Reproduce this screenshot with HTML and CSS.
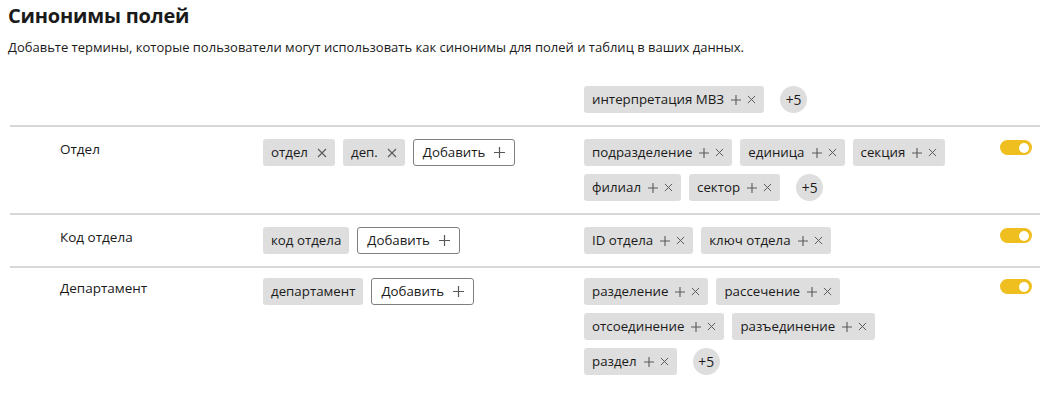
FILE: index.html
```html
<!DOCTYPE html>
<html lang="ru">
<head>
<meta charset="utf-8">
<link rel="stylesheet" href="styles.css">
</head>
<body>
<h1 class="title">Синонимы полей</h1>
<p class="subtitle">Добавьте термины, которые пользователи могут использовать как синонимы для полей и таблиц в ваших данных.</p>

<div class="table">
  <div class="row row-head">
    <div class="label"></div>
    <div class="chips"></div>
    <div class="chips">
      <span class="chip">интерпретация МВЗ<svg class="ic plus" viewBox="0 0 10 10"><path d="M5 0V10M0 5H10"/></svg><svg class="ic x" viewBox="0 0 10 10"><path d="M1 1L9 9M9 1L1 9"/></svg></span>
      <span class="more">+5</span>
    </div>
    <div class="switch-cell"></div>
  </div>

  <div class="row">
    <div class="label">Отдел</div>
    <div class="chips">
      <span class="chip">отдел<svg class="ic x solo" viewBox="0 0 10 10"><path d="M1 1L9 9M9 1L1 9"/></svg></span>
      <span class="chip">деп.<svg class="ic x solo" viewBox="0 0 10 10"><path d="M1 1L9 9M9 1L1 9"/></svg></span>
      <span class="add">Добавить<svg class="ic plus" viewBox="0 0 10 10"><path d="M5 0V10M0 5H10"/></svg></span>
    </div>
    <div class="chips">
      <span class="chip">подразделение<svg class="ic plus" viewBox="0 0 10 10"><path d="M5 0V10M0 5H10"/></svg><svg class="ic x" viewBox="0 0 10 10"><path d="M1 1L9 9M9 1L1 9"/></svg></span>
      <span class="chip">единица<svg class="ic plus" viewBox="0 0 10 10"><path d="M5 0V10M0 5H10"/></svg><svg class="ic x" viewBox="0 0 10 10"><path d="M1 1L9 9M9 1L1 9"/></svg></span>
      <span class="chip">секция<svg class="ic plus" viewBox="0 0 10 10"><path d="M5 0V10M0 5H10"/></svg><svg class="ic x" viewBox="0 0 10 10"><path d="M1 1L9 9M9 1L1 9"/></svg></span>
      <span class="chip">филиал<svg class="ic plus" viewBox="0 0 10 10"><path d="M5 0V10M0 5H10"/></svg><svg class="ic x" viewBox="0 0 10 10"><path d="M1 1L9 9M9 1L1 9"/></svg></span>
      <span class="chip">сектор<svg class="ic plus" viewBox="0 0 10 10"><path d="M5 0V10M0 5H10"/></svg><svg class="ic x" viewBox="0 0 10 10"><path d="M1 1L9 9M9 1L1 9"/></svg></span>
      <span class="more">+5</span>
    </div>
    <div class="switch-cell"><span class="switch"></span></div>
  </div>

  <div class="row">
    <div class="label">Код отдела</div>
    <div class="chips">
      <span class="chip">код отдела</span>
      <span class="add">Добавить<svg class="ic plus" viewBox="0 0 10 10"><path d="M5 0V10M0 5H10"/></svg></span>
    </div>
    <div class="chips">
      <span class="chip">ID отдела<svg class="ic plus" viewBox="0 0 10 10"><path d="M5 0V10M0 5H10"/></svg><svg class="ic x" viewBox="0 0 10 10"><path d="M1 1L9 9M9 1L1 9"/></svg></span>
      <span class="chip">ключ отдела<svg class="ic plus" viewBox="0 0 10 10"><path d="M5 0V10M0 5H10"/></svg><svg class="ic x" viewBox="0 0 10 10"><path d="M1 1L9 9M9 1L1 9"/></svg></span>
    </div>
    <div class="switch-cell"><span class="switch"></span></div>
  </div>

  <div class="row row-last">
    <div class="label">Департамент</div>
    <div class="chips">
      <span class="chip">департамент</span>
      <span class="add">Добавить<svg class="ic plus" viewBox="0 0 10 10"><path d="M5 0V10M0 5H10"/></svg></span>
    </div>
    <div class="chips">
      <span class="chip">разделение<svg class="ic plus" viewBox="0 0 10 10"><path d="M5 0V10M0 5H10"/></svg><svg class="ic x" viewBox="0 0 10 10"><path d="M1 1L9 9M9 1L1 9"/></svg></span>
      <span class="chip">рассечение<svg class="ic plus" viewBox="0 0 10 10"><path d="M5 0V10M0 5H10"/></svg><svg class="ic x" viewBox="0 0 10 10"><path d="M1 1L9 9M9 1L1 9"/></svg></span>
      <span class="chip">отсоединение<svg class="ic plus" viewBox="0 0 10 10"><path d="M5 0V10M0 5H10"/></svg><svg class="ic x" viewBox="0 0 10 10"><path d="M1 1L9 9M9 1L1 9"/></svg></span>
      <span class="chip">разъединение<svg class="ic plus" viewBox="0 0 10 10"><path d="M5 0V10M0 5H10"/></svg><svg class="ic x" viewBox="0 0 10 10"><path d="M1 1L9 9M9 1L1 9"/></svg></span>
      <span class="chip">раздел<svg class="ic plus" viewBox="0 0 10 10"><path d="M5 0V10M0 5H10"/></svg><svg class="ic x" viewBox="0 0 10 10"><path d="M1 1L9 9M9 1L1 9"/></svg></span>
      <span class="more">+5</span>
    </div>
    <div class="switch-cell"><span class="switch"></span></div>
  </div>
</div>
</body>
</html>
```

FILE: styles.css
```css
* { box-sizing: border-box; }
html, body { background: #ffffff; }
body {
  margin: 0;
  padding: 0 0 0 8px;
  font-family: "Open Sans", "Noto Sans", "DejaVu Sans", sans-serif;
  color: #1a1a1a;
  overflow: hidden;
}
.title {
  margin: 3px 0 0 0;
  font-size: 20px;
  font-weight: 700;
  line-height: 26px;
  letter-spacing: -0.2px;
}
.subtitle {
  margin: 9px 0 0 0;
  font-size: 13px;
  line-height: 18px;
}
.table {
  margin: 30px 0 0 2px;
}
.row {
  display: grid;
  grid-template-columns: 253px 321px 390px 1fr;
  padding: 12px 0 12px 0;
  border-bottom: 2px solid #d8d8d8;
}
.row-head { padding: 0 0 12px 0; }
.row-last { border-bottom: none; padding-top: 10px; }
.label {
  padding-left: 50px;
  padding-top: 0;
  font-size: 13.5px;
  line-height: 20px;
}
.chips {
  display: flex;
  flex-wrap: wrap;
  gap: 8px;
  align-content: flex-start;
}
.chip, .add, .more {
  display: inline-flex;
  align-items: center;
  height: 27px;
  font-size: 13.3px;
  line-height: 1;
  white-space: nowrap;
}
.chip {
  padding: 0 8px 0 8px;
  background: #dedede;
  border-radius: 3px;
}
.add {
  padding: 0 9px 0 9px;
  border: 1px solid #7f7f7f;
  border-radius: 3px;
  background: #fff;
}
.ic {
  flex: none;
  fill: none;
  stroke: #5a5a5a;
  stroke-width: 1.1;
}
.plus {
  width: 10px;
  height: 10px;
  margin-left: 7px;
}
.x {
  width: 9px;
  height: 9px;
  margin-left: 6px;
}
.x.solo { margin-left: 9px; width: 10px; height: 10px; }
.add .plus { width: 11px; height: 11px; margin-left: 9px; }
.more {
  justify-content: center;
  width: 27px;
  margin-left: 8px;
  background: #dedede;
  border-radius: 14px;
  font-size: 13.8px;
}
.switch-cell {
  padding-left: 26px;
  padding-top: 1px;
}
.switch {
  display: block;
  position: relative;
  width: 32px;
  height: 15px;
  border-radius: 8px;
  background: #efbf1f;
}
.switch::after {
  content: "";
  position: absolute;
  right: 3px;
  top: 2.5px;
  width: 10px;
  height: 10px;
  border-radius: 50%;
  background: #fff;
}
```
